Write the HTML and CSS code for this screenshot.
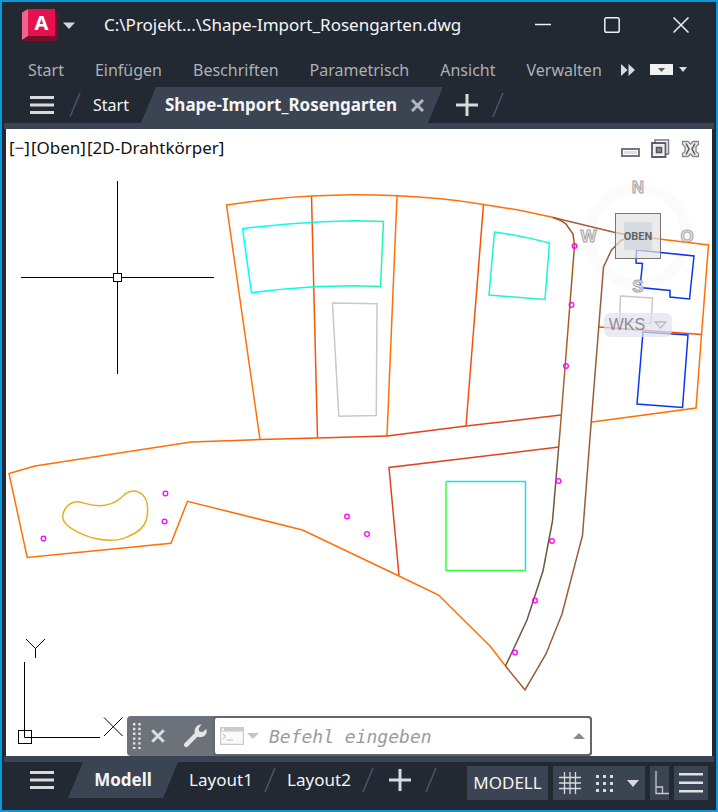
FILE: index.html
```html
<!DOCTYPE html>
<html lang="de">
<head>
<meta charset="utf-8">
<title>Shape-Import_Rosengarten.dwg</title>
<link rel="stylesheet" href="styles.css">
</head>
<body>
<div class="app">
  <header class="titlebar">
    <button class="app-menu" aria-label="Anwendungsmenü">
      <svg class="logo" width="36" height="32" viewBox="0 0 36 32" aria-hidden="true">
        <path fill="#780d2a" d="M28 5h8v27H0l7-5z"/>
        <path fill="#e51050" d="M6 0h27v27H6z"/>
        <path fill="#f0638c" d="M0 3.500 6 0v27l-6 4z"/>
        <text class="logo-letter" x="19.500" y="21" text-anchor="middle">A</text>
      </svg>
      <svg width="12" height="7" viewBox="0 0 12 7" aria-hidden="true"><path fill="#d4d5d6" d="M0 .5h12L6 7z"/></svg>
    </button>
    <h1 class="title">C:\Projekt...\Shape-Import_Rosengarten.dwg</h1>
    <div class="window-controls">
      <button aria-label="Minimieren"><svg width="16" height="16" viewBox="0 0 16 16"><path d="M0 7.500h16"/></svg></button>
      <button aria-label="Maximieren"><svg width="16" height="16" viewBox="0 0 16 16"><rect x=".8" y=".8" width="14.400" height="14.400" rx="1.800"/></svg></button>
      <button aria-label="Schließen"><svg width="16" height="16" viewBox="0 0 16 16"><path d="M.5.5l15 15M15.500.5l-15 15"/></svg></button>
    </div>
  </header>

  <nav class="menu">
    <a href="#">Start</a>
    <a href="#">Einfügen</a>
    <a href="#">Beschriften</a>
    <a href="#">Parametrisch</a>
    <a href="#">Ansicht</a>
    <a href="#">Verwalten</a>
    <div class="menu-tools">
      <button aria-label="Weitere Registerkarten"><svg width="14" height="12" viewBox="0 0 14 12"><path fill="#d9dadc" d="M0 0l6.500 6L0 12zM7.500 0l6.500 6-6.500 6z"/></svg></button>
      <button class="ribbon-mode" aria-label="Multifunktionsleiste"><svg width="23" height="11" viewBox="0 0 23 11"><path fill="#f1f1f1" d="M0 0h23v11H0z"/><path fill="#5a5a5a" d="M8 4h7l-3.500 4z"/></svg></button>
      <button aria-label="Optionen"><svg width="8" height="5" viewBox="0 0 8 5"><path fill="#d9dadc" d="M0 0h8L4 5z"/></svg></button>
    </div>
  </nav>

  <div class="file-tabs">
    <button class="burger" aria-label="Dateien"><svg width="24" height="18" viewBox="0 0 24 18"><path fill="#d9dadc" d="M0 0h24v3H0zM0 7.500h24v3H0zM0 15h24v3H0z"/></svg></button>
    <svg class="slash" width="12" height="24" viewBox="0 0 12 24"><path d="M1 24 11 0"/></svg>
    <a class="tab tab-start" href="#">Start</a>
    <div class="tab tab-file">
      <a href="#">Shape-Import_Rosengarten</a>
      <button aria-label="Tab schließen"><svg width="13" height="13" viewBox="0 0 13 13"><path fill="none" stroke="#b4b7bc" stroke-width="3" d="M1 1l11 11M12 1 1 12"/></svg></button>
    </div>
    <button class="plus" aria-label="Neue Zeichnung"><svg width="22" height="22" viewBox="0 0 22 22"><path fill="#d9dadc" d="M9.500 0h3v9.500H22v3h-9.500V22h-3v-9.500H0v-3h9.500z"/></svg></button>
    <svg class="slash" width="12" height="24" viewBox="0 0 12 24"><path d="M1 24 11 0"/></svg>
  </div>

  <main class="viewport">
    <svg class="drawing" viewBox="6 129 706 627" preserveAspectRatio="xMinYMin meet" role="img" aria-label="Lageplan">
      <defs>
        <linearGradient id="road" gradientUnits="userSpaceOnUse" x1="0" y1="220" x2="0" y2="470">
          <stop offset="0" stop-color="#a4561f"/><stop offset=".8" stop-color="#a9662f"/><stop offset="1" stop-color="#70553f"/>
        </linearGradient>
        <linearGradient id="mid" gradientUnits="userSpaceOnUse" x1="190" y1="0" x2="400" y2="0">
          <stop offset="0" stop-color="#ff7006"/><stop offset="1" stop-color="#e2431f"/>
        </linearGradient>
        <linearGradient id="cyan" gradientUnits="userSpaceOnUse" x1="243" y1="0" x2="384" y2="0">
          <stop offset="0" stop-color="#0ff"/><stop offset="1" stop-color="#23f3bb"/>
        </linearGradient>
      </defs>

      <g class="line thin black">
        <path d="M117.500 181v92.500M117.500 281.500V374M21 277.500h92.500M121.500 277.500H214"/>
        <rect x="113.500" y="273.500" width="8" height="8"/>
        <path d="M24.500 662v75.500H100"/>
        <rect x="18.500" y="730.500" width="13" height="13"/>
        <path d="M26 639l9.500 9.500L45 639M35.500 648.500V658M104 717.500l18.500 18.500M122.500 717.500 104 736"/>
      </g>

      <circle class="compass-ring" cx="638" cy="236" r="48"/>

      <g class="line">
        <path stroke="#c9c9c9" d="M332.500 303l44.500.7-.7 111.800-37.500.8zM620.500 296l32 2-1.500 25.500-31.500-2z"/>
        <path stroke="#f4530c" d="M311.500 196l6 241.500M483.500 204l-17.500 222"/>
        <path stroke="#ff7006" d="M260 439.500 226.500 205q21-3 42-5.500 21-2.500 43-3.500 21-1 43-1.200 21 0 43 1 21 1 43 3 21 2 43 5.700l35 5.500 35 7.500M397 196l-10 240"/>
        <path stroke="url(#mid)" d="M191 442l69-2.500 57-1.500 70-2"/>
        <path stroke="#e2431f" d="M387 436l79-10 95-11M399 575.500l-10-108 170-20.500"/>
        <path stroke="#ff7006" d="M191 442l-156 24-26 7.500 18.200 84L171 543.300l16.500-42L302.500 530l96.500 46 39.500 19L490 646l15.500 20"/>
        <path stroke="url(#cyan)" d="M242.500 228.700q24-3 48.500-5 31-2.500 63-3l29.500.7-3 65-25.500-.7-37 .8q-34 2-66.500 6.200z"/>
        <path stroke="#19f5d6" d="M494.500 232q28 4 55 11l-4.500 56.500-56-4.500z"/>
        <path stroke="#16e0e6" d="M446 481.500h79.500v89"/>
        <path stroke="#35ff42" d="M446 481.500v89h79.500"/>
        <path stroke="#e8ae1d" d="M63 519c-1.500-10 7-17.500 15-17.200 7 .5 13 5.500 27 3.500 12-2 16-8 21-12 7-4 13-2 17 2 6 6 5 18 3.500 24-2 8-9 13.500-18 17-8 4-20 5-32 2.500-14-3-32-12-33.500-20z"/>
        <path stroke="#a35e38" d="M553 217.500l60 14.500 35 7"/>
        <path stroke="#ff7006" d="M630 235.500l78.500 9.500-7 90-5.500 73-104 14"/>
        <path stroke="#f4530c" d="M599 327l103 7.500"/>
        <path stroke="url(#road)" d="M553 217.500q9 3 13 6.500l7 10 1.500 11.500-14 180-8 95.500-9.500 50-16 49-21.500 46"/>
        <path stroke="#9b5c37" d="M505.500 666l19.500 24 21-36 16-40 20.500-78.500 7.500-98 13.500-170.500 8-17 10-10 8-2"/>
        <path stroke="#0a35f2" d="M636.500 250l57.500 6-4.500 43-19.500-2v-6.500l-30-3 2.500-24-6.500-.5zM643 332l45 3-5.500 72.500-45.500-3.500z"/>
      </g>

      <g class="pins">
        <circle cx="43.500" cy="538.500" r="2.300"/><circle cx="165.500" cy="493.500" r="2.300"/><circle cx="164.500" cy="521.500" r="2.300"/>
        <circle cx="347" cy="516.500" r="2.300"/><circle cx="367" cy="534" r="2.300"/><circle cx="574.500" cy="246" r="2.300"/>
        <circle cx="571.500" cy="305" r="2.300"/><circle cx="566" cy="366" r="2.300"/><circle cx="558.500" cy="481" r="2.300"/>
        <circle cx="552" cy="541" r="2.300"/><circle cx="535" cy="600.500" r="2.300"/><circle cx="515" cy="652.500" r="2.300"/>
      </g>

      <g class="compass-letters">
        <text x="638" y="193">N</text><text x="588.500" y="242">W</text><text x="687" y="242">O</text><text x="638" y="292">S</text>
      </g>
    </svg>

    <div class="view-label">
      <button>[−]</button><button>[Oben]</button><button>[2D-Drahtkörper]</button>
    </div>

    <div class="view-controls">
      <button aria-label="Ansicht minimieren"><svg width="19" height="20" viewBox="0 0 19 20"><path fill="#fff" stroke="#74767e" stroke-width="2" d="M1 10h17v7H1z"/><path fill="#dedee0" d="M3 12h13v3H3z"/></svg></button>
      <button aria-label="Ansicht wiederherstellen"><svg width="19" height="20" viewBox="0 0 19 20"><path fill="#fff" stroke="#77787d" stroke-width="1.500" d="M4 1h13.500v14H4z"/><path fill="#f0f0f0" stroke="#5c5c6a" stroke-width="1.800" d="M1 4h13.500v14H1z"/><path fill="#8b8b91" stroke="#55555f" stroke-width="1.500" d="M5.500 8.500h5v5h-5z"/></svg></button>
      <button aria-label="Ansicht schließen"><svg width="19" height="20" viewBox="0 0 19 20"><path fill="#ececec" stroke="#85868a" stroke-width="1.300" d="M1.500 2.500H7l2.500 2.500 2.500-2.500h5.500v3L15 7.500v5l2.500 2v3H12L9.500 15 7 17.500H1.500v-3l2.500-2v-5l-2.500-2z"/><path fill="none" stroke="#55565b" stroke-width="1.500" d="M5 4.500 8 10l-3 5.500M14 4.500 11 10l3 5.500"/></svg></button>
    </div>

    <button class="cube"><svg class="cube-face" width="46" height="46" viewBox="0 0 46 46"><path fill="#d5dbe0" d="M9 9h28v28H9z"/><text x="23" y="27">OBEN</text></svg></button>
    <button class="ucs">WKS <svg width="13" height="8" viewBox="0 0 13 8"><path fill="none" stroke="#b9bbc9" stroke-width="1.300" d="M1 1h11L6.500 7z"/></svg></button>

    <form class="command">
      <span class="grip"><svg width="8" height="26" viewBox="0 0 8 26"><path stroke="#e1e2e4" stroke-width="2.400" stroke-dasharray="2.400 2.400" d="M1.200 0v26M6.500 0v26"/></svg></span>
      <button type="button" aria-label="Befehlszeile schließen"><svg width="14" height="14" viewBox="0 0 14 14"><path fill="none" stroke="#dcdde0" stroke-width="3" d="M1.200 1.200l11.600 11.600M12.800 1.200 1.200 12.800"/></svg></button>
      <button type="button" class="tool" aria-label="Anpassen"><svg width="24" height="24" viewBox="0 0 24 24"><path fill="none" stroke="#e4e5e7" stroke-width="4.500" stroke-linecap="round" d="M3.200 20.800 14.500 9.500"/><path fill="#e4e5e7" d="M18.500.6 15.700 4.300l.6 3.300 3.400.5 3.500-3c1.400 4-1.200 8-5.200 8-5 .5-7.500-4-6-8C13 2 16 0 18.500.6z"/></svg></button>
      <label class="entry">
        <svg width="24" height="18" viewBox="0 0 24 18" aria-hidden="true"><path fill="#fafafa" stroke="#cbcbcb" stroke-width="1.200" d="M.6.6h22.800v16.800H.6z"/><path fill="#cbcbcb" d="M0 0h24v4.500H0z"/><path fill="#fff" d="M2 1.500h2v2H2z"/><path fill="none" stroke="#bdbdbd" d="M2.500 7l3.500 2.500L2.500 12M7 13h6"/></svg>
        <svg width="12" height="6" viewBox="0 0 12 6" aria-hidden="true"><path fill="#c4c4c4" d="M0 0h12L6 6z"/></svg>
        <input type="text" placeholder="Befehl eingeben" aria-label="Befehl eingeben">
        <svg width="12" height="6" viewBox="0 0 12 6" aria-hidden="true"><path fill="#8b8b8b" d="M0 6h12L6 0z"/></svg>
      </label>
    </form>
  </main>

  <footer class="layout-bar">
    <button class="burger" aria-label="Layouts"><svg width="24" height="18" viewBox="0 0 24 18"><path fill="#d9dadc" d="M0 0h24v3H0zM0 7.500h24v3H0zM0 15h24v3H0z"/></svg></button>
    <a class="tab tab-model" href="#">Modell</a>
    <a class="tab tab-layout" href="#">Layout1</a>
    <svg class="slash" width="12" height="24" viewBox="0 0 12 24"><path d="M1 24 11 0"/></svg>
    <a class="tab tab-layout" href="#">Layout2</a>
    <svg class="slash" width="12" height="24" viewBox="0 0 12 24"><path d="M1 24 11 0"/></svg>
    <button class="plus" aria-label="Neues Layout"><svg width="22" height="22" viewBox="0 0 22 22"><path fill="#d9dadc" d="M9.500 0h3v9.500H22v3h-9.500V22h-3v-9.500H0v-3h9.500z"/></svg></button>
    <svg class="slash" width="12" height="24" viewBox="0 0 12 24"><path d="M1 24 11 0"/></svg>
    <div class="status">
      <button class="space">MODELL</button>
      <div class="snap">
        <button aria-label="Raster"><svg width="22" height="22" viewBox="0 0 22 22"><path fill="none" stroke="#d9dadc" stroke-width="1.300" d="M5.500 0v22M11 0v22M16.500 0v22M0 5.500h22M0 11h22M0 16.500h22"/></svg></button>
        <button aria-label="Fang"><svg width="17" height="17" viewBox="0 0 17 17"><path stroke="#d9dadc" stroke-width="3" stroke-dasharray="3 4" d="M0 1.500h17M0 8.500h17M0 15.500h17"/></svg></button>
        <button aria-label="Fangoptionen"><svg width="12" height="7" viewBox="0 0 12 7"><path fill="#d9dadc" d="M0 0h12L6 7z"/></svg></button>
      </div>
      <button class="ortho" aria-label="Orthomodus"><svg width="14" height="24" viewBox="0 0 14 24"><path fill="none" stroke="#c6c8cb" stroke-width="1.300" d="M1 0v22.500h13M1 16h6.500v6.500"/></svg></button>
      <button class="more" aria-label="Anpassung"><svg width="24" height="20" viewBox="0 0 24 20"><path fill="#e0e1e2" d="M0 0h24v2.500H0zM0 8.500h24V11H0zM0 17h24v2.500H0z"/></svg></button>
    </div>
  </footer>
</div>
</body>
</html>
```
FILE: styles.css
```css
* { box-sizing: border-box; }

body {
  margin: 0;
  font-family: "Noto Sans", "Open Sans", sans-serif;
  font-size: 17px;
  line-height: 24px;
}

button {
  display: inline-flex;
  align-items: center;
  justify-content: center;
  padding: 0;
  border: 0;
  background: none;
  color: inherit;
  font: inherit;
}

a { color: inherit; text-decoration: none; }
svg { display: block; flex: none; }

.app {
  display: flex;
  flex-direction: column;
  min-height: 100vh;
  border: 2px solid #0a98dc;
  background: #222933;
  color: #f5f5f5;
}

.titlebar {
  display: flex;
  align-items: center;
  height: 46px;
  padding: 0 27px 0 20px;
}
.app-menu { gap: 5px; }
.logo { overflow: visible; }
.logo-letter {
  font: bold 20px "Noto Sans", sans-serif;
  fill: #fff;
}
.title {
  flex: 1;
  margin: 0 0 0 29px;
  font-size: 17px;
  font-weight: 400;
  white-space: nowrap;
}
.window-controls { display: flex; gap: 53px; }
.window-controls svg {
  fill: none;
  stroke: #f0f0f0;
  stroke-width: 1.5px;
}

.menu {
  display: flex;
  align-items: center;
  gap: 31px;
  height: 39px;
  padding: 4px 28px 0 26px;
  color: #adb0b5;
  font-size: 16px;
}
.menu-tools {
  display: flex;
  align-items: center;
  gap: 6px;
  margin-left: -12px;
}
.menu-tools { margin: 0 0 0 -12px; }
.ribbon-mode { margin-left: 9px; }

.file-tabs {
  display: flex;
  align-items: center;
  height: 42px;
  margin: 0 2px;
  padding: 0 0 6px 26px;
  background: linear-gradient(#222933 36px, #3b4453 36px);
}
.slash { fill: none; stroke: #4c5563; stroke-width: 1.5px; }
.tab { display: flex; align-items: center; height: 36px; white-space: nowrap; }
.file-tabs .burger { margin-right: 15px; }
.tab-start { width: 60px; padding-left: 12px; font-size: 16px; }
.tab-file {
  justify-content: space-between;
  width: 302px;
  padding: 0 19px 0 24px;
  background: #3b4453;
  clip-path: polygon(15px 0, 100% 0, calc(100% - 15px) 100%, 0 100%);
  font-weight: 700;
}
.plus { margin: 0 14px 0 13px; }

.viewport {
  position: relative;
  flex: 1;
  margin: 0 4px;
  background: #fff;
  color: #111;
}
.drawing { width: 100%; height: auto; }
.line { fill: none; stroke-width: 1.5px; }
.thin { stroke-width: 1px; }
.black { stroke: #000; }
.pins { fill: none; stroke: #f0f; stroke-width: 1.3px; }
.compass-ring { fill: none; stroke: #fbfbfb; stroke-width: 10px; }
.compass-letters {
  font: bold 17px "Liberation Sans", sans-serif;
  fill: #e8e8e8;
  stroke: #a6a6a6;
  stroke-width: 1px;
  text-anchor: middle;
}

.view-label { position: absolute; top: 7px; left: 3px; display: flex; gap: 1px; }
.view-controls { position: absolute; top: 10px; right: 12px; display: flex; gap: 11px; }
.cube {
  position: absolute;
  top: 84px;
  right: 51px;
  border: 1px solid #777;
  background: rgba(226, 226, 226, 0.7);
}
.cube-face { margin: -1px; }
.cube text {
  font: bold 11px Roboto, sans-serif;
  fill: #5f6469;
  text-anchor: middle;
}
.ucs {
  position: absolute;
  top: 184px;
  right: 40px;
  gap: 9px;
  width: 68px;
  height: 24px;
  border-radius: 6px;
  background: rgba(225, 225, 240, 0.7);
  color: #8c8c94;
  font: 16px "Liberation Sans", sans-serif;
}

.command {
  position: absolute;
  bottom: 0;
  left: 121px;
  right: 120px;
  display: flex;
  align-items: center;
  height: 40px;
  border-radius: 4px;
  background: #6d717a;
}
.grip { margin: 0 10px 0 6px; }
.tool { margin: 0 6px 0 18px; }
.entry {
  display: flex;
  flex: 1;
  align-items: center;
  gap: 3px;
  min-width: 0;
  height: 40px;
  padding: 0 5px;
  border: 2px solid #63676c;
  border-radius: 4px;
  background: #fff;
}
.entry input {
  flex: 1;
  min-width: 0;
  padding: 0 7px;
  border: 0;
  outline: 0;
  background: none;
  font: italic 18px "DejaVu Sans Mono", monospace;
}
.entry input::placeholder { color: #9b9b9b; opacity: 1; }

.layout-bar {
  display: flex;
  align-items: flex-start;
  height: 54px;
  margin: 0 2px;
  padding: 6px 6px 0 26px;
  background: linear-gradient(#3b4453 6px, #222933 6px);
}
.layout-bar > .burger, .layout-bar > .plus { height: 36px; }
.layout-bar > .plus { margin: 0 14px 0 15px; }
.layout-bar > .slash { margin-top: 6px; }
.tab-model {
  justify-content: center;
  width: 110px;
  margin-left: 14px;
  background: #3b4453;
  clip-path: polygon(15px 0, 100% 0, calc(100% - 15px) 100%, 0 100%);
  font-weight: 700;
}
.tab-layout { justify-content: center; width: 86px; }
.status { display: flex; gap: 5px; margin: 4px 0 0 auto; }
.status > * { height: 34px; background: #3b4453; }
.space { width: 81px; }
.snap { display: flex; align-items: center; justify-content: space-between; width: 92px; padding: 0 6px; }
.ortho { width: 19px; justify-content: flex-end; }
.more { width: 34px; }
```
